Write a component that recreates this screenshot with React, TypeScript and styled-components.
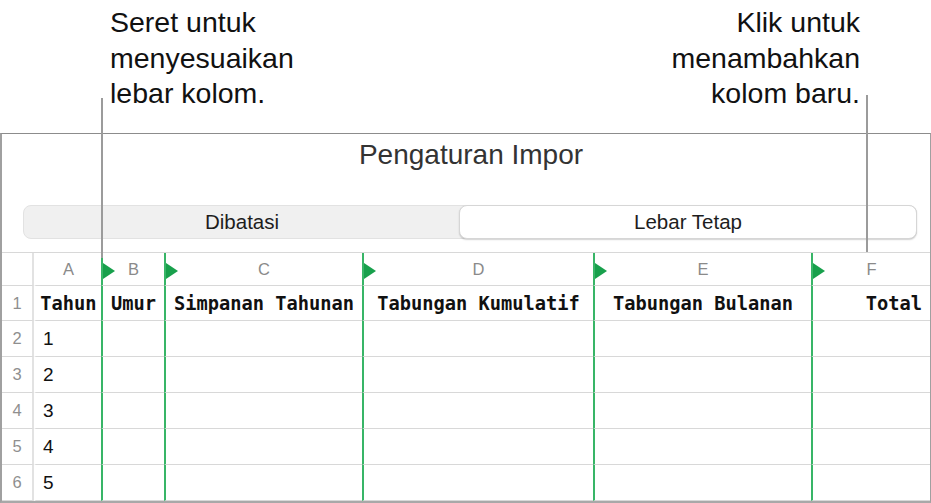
import React, { FC } from "react";
import styled, { createGlobalStyle } from "styled-components";

const GlobalStyle = createGlobalStyle`
  html, body {
    margin: 0;
    padding: 0;
    background: #ffffff;
  }
  body {
    font-family: "Liberation Sans", Arial, sans-serif;
    color: #111;
  }
`;

const GREEN_LINE = "#38b567";
const GREEN_FLAG = "#18a04c";
const GRID_LINE = "#d8d8d8";

const COLUMNS = [
  { letter: "A", width: 67, title: "Tahun", align: "center" },
  { letter: "B", width: 63, title: "Umur", align: "center" },
  { letter: "C", width: 198, title: "Simpanan Tahunan", align: "center" },
  { letter: "D", width: 231, title: "Tabungan Kumulatif", align: "center" },
  { letter: "E", width: 218, title: "Tabungan Bulanan", align: "center" },
  { letter: "F", width: 119, title: "Total", align: "right" },
];

const DATA = [1, 2, 3, 4, 5];

export default function App() {
  return (
    <>
      <GlobalStyle />
      <Page>
        <Callouts>
          <Callout>
            Seret untuk
            <br />
            menyesuaikan
            <br />
            lebar kolom.
          </Callout>
          <Callout $right>
            Klik untuk
            <br />
            menambahkan
            <br />
            kolom baru.
          </Callout>
        </Callouts>

        <Leader $x={101} $top={98} $height={160} />
        <Leader $x={866} $top={95} $height={157} />

        <Panel>
          <Title>Pengaturan Impor</Title>
          <Segmented>
            <Segment>Dibatasi</Segment>
            <Segment $active>Lebar Tetap</Segment>
          </Segmented>
          <Sheet />
        </Panel>
      </Page>
    </>
  );
}

const Sheet: FC = () => {
  const template = ["32px", ...COLUMNS.map((c) => `${c.width}px`)].join(" ");
  return (
    <Grid style={{ gridTemplateColumns: template }}>
      <RowNum $height={33} />
      {COLUMNS.map((c, i) => (
        <LetterCell key={c.letter} $guide={i > 0}>
          {c.letter}
        </LetterCell>
      ))}

      <RowNum $height={35}>1</RowNum>
      {COLUMNS.map((c, i) => (
        <TitleCell key={c.letter} $guide={i > 0} $align={c.align}>
          {c.title}
        </TitleCell>
      ))}

      {DATA.map((n) => (
        <React.Fragment key={n}>
          <RowNum $height={36}>{n + 1}</RowNum>
          {COLUMNS.map((c, i) => (
            <DataCell key={c.letter} $guide={i > 0}>
              {i === 0 ? n : ""}
            </DataCell>
          ))}
        </React.Fragment>
      ))}
    </Grid>
  );
};

const Page = styled.div`
  position: relative;
  width: 931px;
  height: 503px;
  overflow: hidden;
`;

const Callouts = styled.div`
  display: flex;
  justify-content: space-between;
  height: 133px;
  padding: 5px 71px 0 110px;
  box-sizing: border-box;
`;

const Callout = styled.div<{ $right?: boolean }>`
  font-size: 28.5px;
  line-height: 35.5px;
  color: #111;
  text-align: ${(p) => (p.$right ? "right" : "left")};
`;

const Leader = styled.div<{ $x: number; $top: number; $height: number }>`
  position: absolute;
  left: ${(p) => p.$x}px;
  top: ${(p) => p.$top}px;
  width: 2px;
  height: ${(p) => p.$height}px;
  background: #9b9b9b;
  z-index: 2;
`;

const Panel = styled.div`
  width: 931px;
  height: 370px;
  box-sizing: border-box;
  border-top: 1px solid #8c8c8c;
  border-left: 2px solid #a0a0a0;
  border-right: 1px solid #a0a0a0;
  border-bottom: 2px solid #a8a8a8;
  display: flex;
  flex-direction: column;
`;

const Title = styled.div`
  padding-top: 5px;
  height: 32px;
  line-height: 32px;
  font-size: 28px;
  color: #333;
  text-align: center;
  padding-left: 10px;
`;

const Segmented = styled.div`
  display: grid;
  grid-template-columns: 436px 1fr;
  margin: 34px 13px 13px 21px;
  height: 34px;
  box-sizing: border-box;
  background: #f0f0f0;
  border: 1px solid #e2e2e2;
  border-radius: 8px;
`;

const Segment = styled.div<{ $active?: boolean }>`
  display: flex;
  align-items: center;
  justify-content: center;
  font-size: 20.5px;
  color: #1d1d1d;
  border-radius: 8px;
  margin: -1px;
  background: ${(p) => (p.$active ? "#ffffff" : "transparent")};
  border: 1px solid ${(p) => (p.$active ? "#d6d6d6" : "transparent")};
  box-shadow: ${(p) => (p.$active ? "0 1px 1.5px rgba(0,0,0,0.18)" : "none")};
`;

const Grid = styled.div`
  display: grid;
  border-top: 1px solid ${GRID_LINE};
`;

const RowNum = styled.div<{ $height: number }>`
  height: ${(p) => p.$height}px;
  box-sizing: border-box;
  border-bottom: 1px solid ${GRID_LINE};
  border-right: 2px solid #e2e2e2;
  display: flex;
  align-items: center;
  justify-content: center;
  font-size: 16.5px;
  color: #8f8f8f;
`;

const BaseCell = styled.div<{ $guide?: boolean }>`
  position: relative;
  box-sizing: border-box;
  border-bottom: 1px solid ${GRID_LINE};
  border-left: 2px solid ${(p) => (p.$guide ? GREEN_LINE : "transparent")};
  display: flex;
  align-items: center;
  white-space: nowrap;
`;

const LetterCell = styled(BaseCell)`
  justify-content: center;
  font-size: 16.5px;
  color: #8a8a8a;

  &::before {
    content: "";
    display: ${(p) => (p.$guide ? "block" : "none")};
    position: absolute;
    left: 0;
    top: 10px;
    border-style: solid;
    border-width: 8px 0 8px 12px;
    border-color: transparent transparent transparent ${GREEN_FLAG};
  }
`;

const TitleCell = styled(BaseCell)<{ $align: string }>`
  justify-content: ${(p) => (p.$align === "right" ? "flex-end" : "center")};
  padding-right: ${(p) => (p.$align === "right" ? "8px" : "0")};
  font-family: "DejaVu Sans Mono", "Liberation Mono", monospace;
  font-weight: bold;
  font-size: 18.7px;
  color: #111;
`;

const DataCell = styled(BaseCell)`
  padding-left: 7px;
  font-size: 19px;
  color: #111;
`;
